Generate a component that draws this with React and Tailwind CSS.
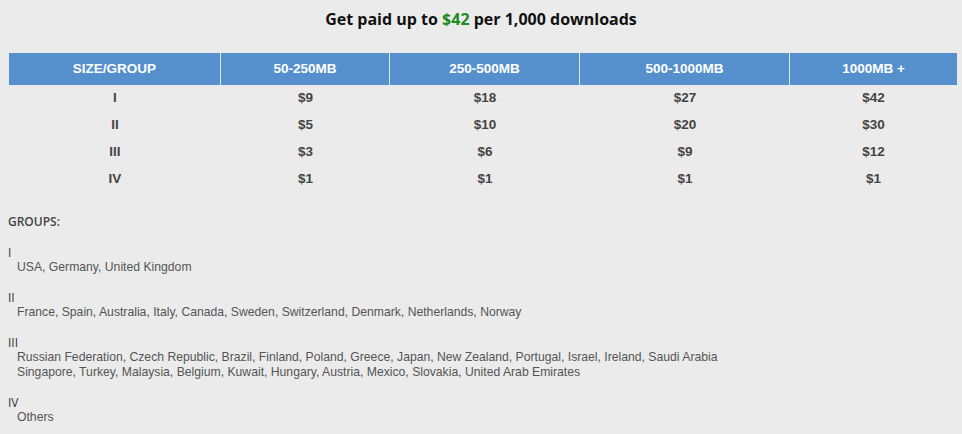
const cols = [
  { label: 'SIZE/GROUP', w: 'w-[212px]' },
  { label: '50-250MB', w: 'w-[169px]' },
  { label: '250-500MB', w: 'w-[190px]' },
  { label: '500-1000MB', w: 'w-[210px]' },
  { label: '1000MB +', w: 'flex-1' },
];

const rows = [
  ['I', '$9', '$18', '$27', '$42'],
  ['II', '$5', '$10', '$20', '$30'],
  ['III', '$3', '$6', '$9', '$12'],
  ['IV', '$1', '$1', '$1', '$1'],
];

const groups = [
  { name: 'I', lines: ['USA, Germany, United Kingdom'] },
  {
    name: 'II',
    lines: ['France, Spain, Australia, Italy, Canada, Sweden, Switzerland, Denmark, Netherlands, Norway'],
  },
  {
    name: 'III',
    lines: [
      'Russian Federation, Czech Republic, Brazil, Finland, Poland, Greece, Japan, New Zealand, Portugal, Israel, Ireland, Saudi Arabia',
      'Singapore, Turkey, Malaysia, Belgium, Kuwait, Hungary, Austria, Mexico, Slovakia, United Arab Emirates',
    ],
  },
  { name: 'IV', lines: ['Others'] },
];

export default function App() {
  return (
    <div className="min-h-[434px] bg-[#ebebeb] font-['Liberation_Sans',Arial,sans-serif]">
      <h1 className="pt-[8px] text-center font-['Open_Sans',sans-serif] text-[16px] leading-[22px] font-bold text-[#111]">
        Get paid up to <span className="text-[#1e8a1e]">$42</span> per 1,000 downloads
      </h1>

      <div className="mx-[9px] mt-[23px] mr-[5px]">
        <div className="flex h-[32px] bg-[#5590cd] text-[13.5px] font-bold text-white">
          {cols.map((c, i) => (
            <div
              key={c.label}
              className={`${c.w} flex items-center justify-center ${i < cols.length - 1 ? 'border-r border-[#dbe7f5]' : ''}`}
            >
              {c.label}
            </div>
          ))}
        </div>
        {rows.map((r) => (
          <div key={r[0]} className="flex h-[27px] text-[13.5px] font-bold text-[#444]">
            {r.map((v, i) => (
              <div key={i} className={`${cols[i].w} flex items-center justify-center`}>
                {v}
              </div>
            ))}
          </div>
        ))}
      </div>

      <div className="px-[8px] pt-[21px] text-[12.2px] leading-[15px]">
        <p className="mb-[16px] font-['Open_Sans',sans-serif] text-[12px] font-semibold text-[#444]">GROUPS:</p>
        {groups.map((g) => (
          <div key={g.name} className="mb-[15px]">
            <p className="font-['Open_Sans',sans-serif] text-[12px] text-[#333]">{g.name}</p>
            {g.lines.map((l) => (
              <p key={l} className="pl-[9px] text-[#555]">
                {l}
              </p>
            ))}
          </div>
        ))}
      </div>
    </div>
  );
}
